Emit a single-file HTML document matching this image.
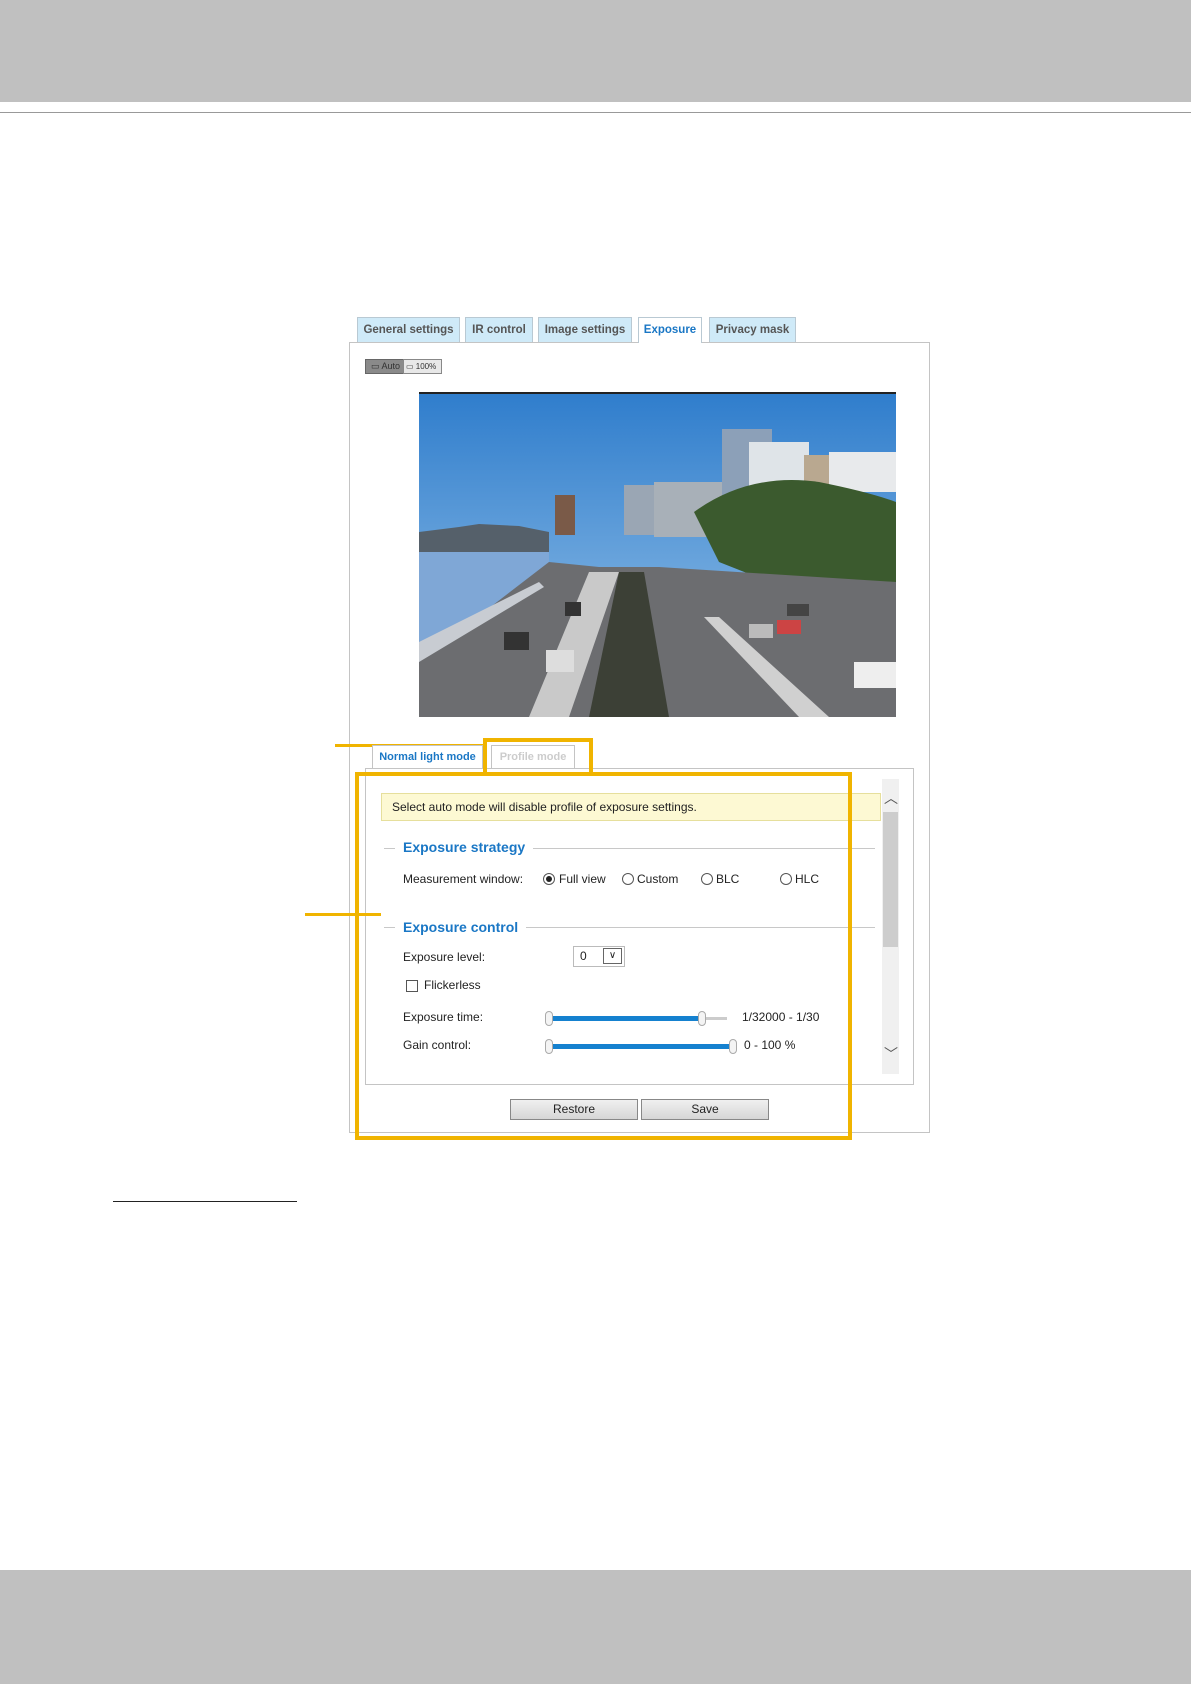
<!DOCTYPE html>
<html><head><meta charset="utf-8"><style>
*{margin:0;padding:0;box-sizing:border-box}
body{width:1191px;height:1684px;position:relative;background:#fff;font-family:"Liberation Sans",Arial,sans-serif;font-size:12px;color:#222;overflow:hidden}
.a{position:absolute}
.tab{position:absolute;top:317px;height:25px;border:1px solid #b9c9d3;border-bottom:none;background:#cfeaf8;color:#555;font-weight:bold;font-size:11.5px;text-align:center;line-height:24px;white-space:nowrap}
.hdr{position:absolute;left:395px;color:#1a77c5;font-weight:bold;font-size:14px;background:#fff;padding:0 8px}
.hl{position:absolute;left:384px;width:491px;height:1px;background:#c8c8c8}
.radio{position:absolute;width:12px;height:12px;border:1px solid #555;border-radius:50%;background:#fff}
.lbl{position:absolute;font-size:12px;color:#222;white-space:nowrap}
.btn{position:absolute;top:1099px;width:128px;height:21px;border:1px solid #888;background:linear-gradient(#f0f0f0,#d6d6d6);text-align:center;line-height:19px;font-size:12px}
.yb{position:absolute;border:4px solid #f0b400}
</style></head><body>
<div class="a" style="left:0;top:0;width:1191px;height:102px;background:#c0c0c0"></div>
<div class="a" style="left:0;top:112px;width:1191px;height:1px;background:#999"></div>

<div class="tab" style="left:357px;width:103px">General settings</div>
<div class="tab" style="left:465px;width:68px">IR control</div>
<div class="tab" style="left:538px;width:94px">Image settings</div>
<div class="tab" style="left:638px;width:64px;background:#fff;color:#1a77c5;height:26px;z-index:2">Exposure</div>
<div class="tab" style="left:709px;width:87px">Privacy mask</div>
<div class="a" style="left:349px;top:342px;width:581px;height:791px;border:1px solid #c4c4c4"></div>

<div class="a" style="left:365px;top:359px;width:39px;height:15px;border:1px solid #666;background:#8a8a8a;font-size:9px;color:#333;line-height:13px;padding-left:5px;white-space:nowrap;overflow:hidden">▭ Auto</div>
<div class="a" style="left:403px;top:359px;width:39px;height:15px;border:1px solid #888;background:#e8e8e8;font-size:8px;color:#333;line-height:13px;padding-left:2px;white-space:nowrap;overflow:hidden">▭ 100%</div>

<svg class="a" style="left:419px;top:392px" width="477" height="325" viewBox="0 0 477 325">
<defs><linearGradient id="sky" x1="0" y1="0" x2="0" y2="1"><stop offset="0" stop-color="#2f7dcc"/><stop offset="1" stop-color="#9cc6ea"/></linearGradient></defs>
<rect width="477" height="325" fill="url(#sky)"/>
<path d="M0 140 L40 135 L60 132 L100 134 L130 140 L130 160 L0 160Z" fill="#55606a"/>
<rect x="136" y="103" width="20" height="40" fill="#7a5a48"/>
<rect x="205" y="93" width="35" height="50" fill="#9aa6b4"/>
<rect x="235" y="90" width="70" height="55" fill="#a8b0b8"/>
<rect x="303" y="37" width="50" height="100" fill="#8ca0b8"/>
<rect x="330" y="50" width="60" height="90" fill="#dfe4e8"/>
<rect x="385" y="63" width="60" height="30" fill="#b9a890"/>
<rect x="410" y="60" width="67" height="40" fill="#e8eaec"/>
<path d="M275 120 Q330 80 400 90 Q450 100 477 110 L477 240 L300 170Z" fill="#3b5a2e"/>
<path d="M0 160 L130 160 L130 170 L0 270Z" fill="#7fa7d6"/>
<path d="M0 270 L130 170 L180 175 L240 175 L477 190 L477 325 L0 325Z" fill="#6c6d70"/>
<path d="M170 180 L200 180 L150 325 L110 325Z" fill="#c9c9c9"/>
<path d="M200 180 L225 180 L250 325 L170 325Z" fill="#3c4036"/>
<path d="M285 225 L300 225 L410 325 L380 325Z" fill="#d0d0d0"/>
<path d="M0 250 L120 190 L125 195 L0 270Z" fill="#c8ccd2"/>
<rect x="85" y="240" width="25" height="18" fill="#333"/>
<rect x="127" y="258" width="28" height="22" fill="#ddd"/>
<rect x="146" y="210" width="16" height="14" fill="#333"/>
<rect x="330" y="232" width="24" height="14" fill="#bbb"/>
<rect x="358" y="228" width="24" height="14" fill="#c44"/>
<rect x="368" y="212" width="22" height="12" fill="#444"/>
<rect x="435" y="270" width="42" height="26" fill="#eee"/>
<rect x="0" y="0" width="477" height="2" fill="#222"/>
</svg>

<div class="a" style="left:372px;top:745px;width:111px;height:23px;border:1px solid #c4c4c4;border-bottom:none;background:#fff;color:#1a77c5;font-weight:bold;font-size:11px;line-height:22px;text-align:center;z-index:2">Normal light mode</div>
<div class="a" style="left:491px;top:745px;width:84px;height:23px;border:1px solid #c4c4c4;border-bottom:none;background:#fff;color:#ccc;font-weight:bold;font-size:11px;line-height:22px;text-align:center">Profile mode</div>
<div class="a" style="left:365px;top:768px;width:549px;height:317px;border:1px solid #c4c4c4"></div>

<div class="a" style="left:882px;top:779px;width:17px;height:295px;background:#f0f0f0"></div>
<div class="a" style="left:883px;top:812px;width:15px;height:135px;background:#cdcdcd"></div>
<div class="a" style="left:884px;top:788px;font-size:14px;color:#555">︿</div>
<div class="a" style="left:884px;top:1044px;font-size:14px;color:#555">﹀</div>

<div class="a" style="left:381px;top:793px;width:500px;height:28px;background:#fdf9d3;border:1px solid #e6df9c;font-size:12px;line-height:26px;padding-left:10px">Select auto mode will disable profile of exposure settings.</div>

<div class="hl" style="top:848px"></div>
<div class="hdr" style="top:839px">Exposure strategy</div>
<div class="lbl" style="left:403px;top:872px">Measurement window:</div>
<div class="radio" style="left:543px;top:873px"></div><div class="a" style="left:546px;top:876px;width:6px;height:6px;border-radius:50%;background:#222"></div>
<div class="lbl" style="left:559px;top:872px">Full view</div>
<div class="radio" style="left:622px;top:873px"></div><div class="lbl" style="left:637px;top:872px">Custom</div>
<div class="radio" style="left:701px;top:873px"></div><div class="lbl" style="left:716px;top:872px">BLC</div>
<div class="radio" style="left:780px;top:873px"></div><div class="lbl" style="left:795px;top:872px">HLC</div>

<div class="hl" style="top:927px"></div>
<div class="hdr" style="top:919px">Exposure control</div>
<div class="lbl" style="left:403px;top:950px">Exposure level:</div>
<div class="a" style="left:573px;top:946px;width:52px;height:21px;border:1px solid #bbb;font-size:12px;line-height:19px;padding-left:6px">0</div>
<div class="a" style="left:603px;top:948px;width:19px;height:16px;border:1px solid #666;font-size:10px;text-align:center;line-height:14px">∨</div>
<div class="a" style="left:406px;top:980px;width:12px;height:12px;border:1px solid #555"></div>
<div class="lbl" style="left:424px;top:978px">Flickerless</div>
<div class="lbl" style="left:403px;top:1010px">Exposure time:</div>
<div class="a" style="left:548px;top:1017px;width:179px;height:3px;background:#ccc"></div>
<div class="a" style="left:548px;top:1016px;width:154px;height:5px;background:#1581cf"></div>
<div class="a" style="left:545px;top:1011px;width:8px;height:15px;border:1px solid #aaa;border-radius:4px;background:#f4f4f4"></div>
<div class="a" style="left:698px;top:1011px;width:8px;height:15px;border:1px solid #aaa;border-radius:4px;background:#f4f4f4"></div>
<div class="lbl" style="left:742px;top:1010px">1/32000 - 1/30</div>
<div class="lbl" style="left:403px;top:1038px">Gain control:</div>
<div class="a" style="left:548px;top:1044px;width:185px;height:5px;background:#1581cf"></div>
<div class="a" style="left:545px;top:1039px;width:8px;height:15px;border:1px solid #aaa;border-radius:4px;background:#f4f4f4"></div>
<div class="a" style="left:729px;top:1039px;width:8px;height:15px;border:1px solid #aaa;border-radius:4px;background:#f4f4f4"></div>
<div class="lbl" style="left:744px;top:1038px">0 - 100 %</div>

<div class="btn" style="left:510px">Restore</div>
<div class="btn" style="left:641px">Save</div>

<div class="yb" style="left:355px;top:772px;width:497px;height:368px"></div>
<div class="yb" style="left:483px;top:738px;width:110px;height:38px"></div>
<div class="a" style="left:335px;top:744px;width:150px;height:3px;background:#f0b400"></div>
<div class="a" style="left:305px;top:913px;width:76px;height:3px;background:#f0b400"></div>

<div class="a" style="left:113px;top:1201px;width:184px;height:1px;background:#222"></div>
<div class="a" style="left:0;top:1570px;width:1191px;height:114px;background:#c0c0c0"></div>
</body></html>
